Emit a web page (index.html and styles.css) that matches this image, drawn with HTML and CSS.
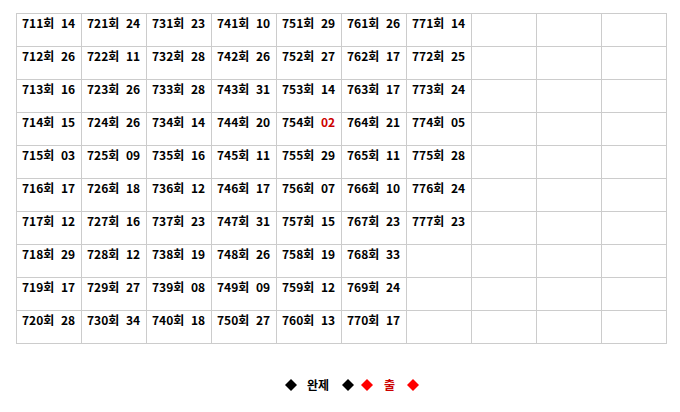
FILE: index.html
```html
<!DOCTYPE html>
<html lang="ko">
<head>
<meta charset="utf-8">
<link rel="stylesheet" href="styles.css">
</head>
<body>
<div class="wrap">
<table class="grid">
<tr><td>711회&nbsp; 14</td><td>721회&nbsp; 24</td><td>731회&nbsp; 23</td><td>741회&nbsp; 10</td><td>751회&nbsp; 29</td><td>761회&nbsp; 26</td><td>771회&nbsp; 14</td><td></td><td></td><td></td></tr>
<tr><td>712회&nbsp; 26</td><td>722회&nbsp; 11</td><td>732회&nbsp; 28</td><td>742회&nbsp; 26</td><td>752회&nbsp; 27</td><td>762회&nbsp; 17</td><td>772회&nbsp; 25</td><td></td><td></td><td></td></tr>
<tr><td>713회&nbsp; 16</td><td>723회&nbsp; 26</td><td>733회&nbsp; 28</td><td>743회&nbsp; 31</td><td>753회&nbsp; 14</td><td>763회&nbsp; 17</td><td>773회&nbsp; 24</td><td></td><td></td><td></td></tr>
<tr><td>714회&nbsp; 15</td><td>724회&nbsp; 26</td><td>734회&nbsp; 14</td><td>744회&nbsp; 20</td><td>754회&nbsp; <span class="red">02</span></td><td>764회&nbsp; 21</td><td>774회&nbsp; 05</td><td></td><td></td><td></td></tr>
<tr><td>715회&nbsp; 03</td><td>725회&nbsp; 09</td><td>735회&nbsp; 16</td><td>745회&nbsp; 11</td><td>755회&nbsp; 29</td><td>765회&nbsp; 11</td><td>775회&nbsp; 28</td><td></td><td></td><td></td></tr>
<tr><td>716회&nbsp; 17</td><td>726회&nbsp; 18</td><td>736회&nbsp; 12</td><td>746회&nbsp; 17</td><td>756회&nbsp; 07</td><td>766회&nbsp; 10</td><td>776회&nbsp; 24</td><td></td><td></td><td></td></tr>
<tr><td>717회&nbsp; 12</td><td>727회&nbsp; 16</td><td>737회&nbsp; 23</td><td>747회&nbsp; 31</td><td>757회&nbsp; 15</td><td>767회&nbsp; 23</td><td>777회&nbsp; 23</td><td></td><td></td><td></td></tr>
<tr><td>718회&nbsp; 29</td><td>728회&nbsp; 12</td><td>738회&nbsp; 19</td><td>748회&nbsp; 26</td><td>758회&nbsp; 19</td><td>768회&nbsp; 33</td><td></td><td></td><td></td><td></td></tr>
<tr><td>719회&nbsp; 17</td><td>729회&nbsp; 27</td><td>739회&nbsp; 08</td><td>749회&nbsp; 09</td><td>759회&nbsp; 12</td><td>769회&nbsp; 24</td><td></td><td></td><td></td><td></td></tr>
<tr><td>720회&nbsp; 28</td><td>730회&nbsp; 34</td><td>740회&nbsp; 18</td><td>750회&nbsp; 27</td><td>760회&nbsp; 13</td><td>770회&nbsp; 17</td><td></td><td></td><td></td><td></td></tr>
</table>
<div class="legend">
  <svg class="dia" viewBox="0 0 12 12"><polygon points="6,0 12,6 6,12 0,6" fill="#000"/></svg>
  <span class="lbl lbl-a">완제</span>
  <svg class="dia" viewBox="0 0 12 12"><polygon points="6,0 12,6 6,12 0,6" fill="#000"/></svg>
  <svg class="dia dia-gap" viewBox="0 0 12 12"><polygon points="6,0 12,6 6,12 0,6" fill="#ff0000"/></svg>
  <span class="lbl lbl-b red">출</span>
  <svg class="dia" viewBox="0 0 12 12"><polygon points="6,0 12,6 6,12 0,6" fill="#ff0000"/></svg>
</div>
</div>
</body>
</html>
```
FILE: styles.css
```css
html, body { margin: 0; padding: 0; background: #fff; }
body { font-family: "Noto Sans CJK KR", "Noto Sans", sans-serif; font-size: 12px; font-weight: bold; color: #000; }
.wrap { padding: 13px 0 0 16px; }
.grid { border-collapse: collapse; table-layout: fixed; width: 651px; }
.grid td { width: 64px; height: 33px; border: 1px solid #cccccc; padding: 0 0 0 5px; vertical-align: top; line-height: 18px; white-space: nowrap; box-sizing: border-box; }
.red { color: #cc0000; }
.legend { margin-top: 31px; margin-left: 269px; display: flex; align-items: center; height: 20px; }
.dia { width: 12px; height: 12px; display: block; }
.lbl { line-height: 20px; }
.lbl-a { margin: 0 13px 0 10px; }
.lbl-b { margin: 0 12px 0 11px; }
.dia-gap { margin-left: 7px; }
```
